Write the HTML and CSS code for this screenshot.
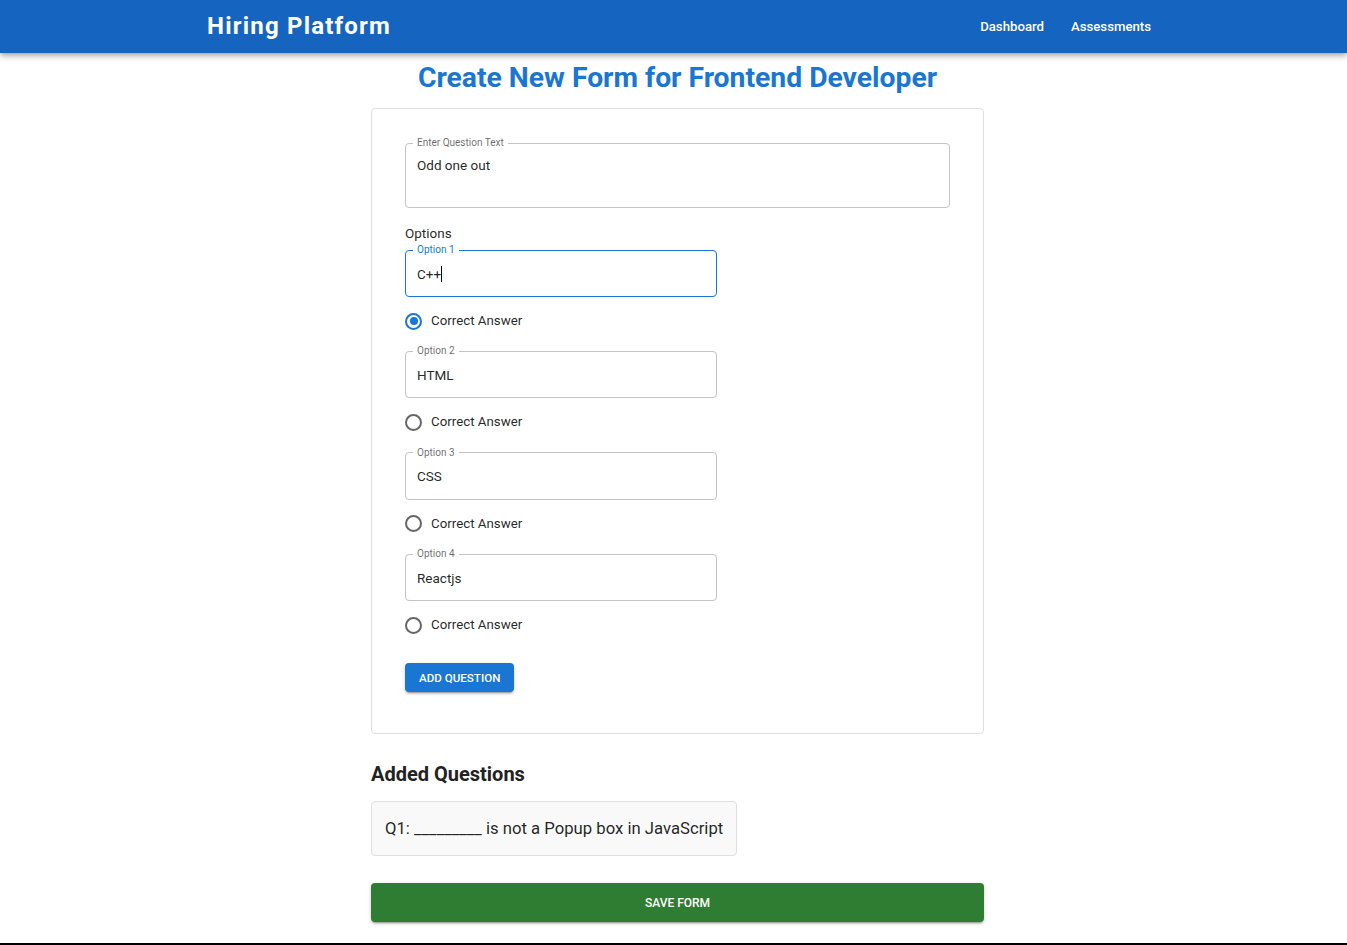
FILE: index.html
```html
<!DOCTYPE html>
<html lang="en">
<head>
<meta charset="utf-8">
<title>Hiring Platform</title>
<link rel="stylesheet" href="styles.css">
</head>
<body>
<header class="appbar">
  <div class="toolbar">
    <div class="brand">Hiring Platform</div>
    <nav class="nav">
      <a class="nav-btn">Dashboard</a>
      <a class="nav-btn">Assessments</a>
    </nav>
  </div>
</header>
<main class="page">
  <h1 class="page-title">Create New Form for Frontend Developer</h1>
  <section class="card">
    <fieldset class="field field-multi">
      <legend class="field-label">Enter Question Text</legend>
      <div class="field-value">Odd one out</div>
    </fieldset>
    <div class="options-label">Options</div>
    <div class="options">
      <div class="option">
        <fieldset class="field field-opt focused">
          <legend class="field-label">Option 1</legend>
          <div class="field-value">C++<span class="caret"></span></div>
        </fieldset>
        <label class="radio-row"><span class="radio checked"></span><span class="radio-text">Correct Answer</span></label>
      </div>
      <div class="option">
        <fieldset class="field field-opt">
          <legend class="field-label">Option 2</legend>
          <div class="field-value">HTML</div>
        </fieldset>
        <label class="radio-row"><span class="radio"></span><span class="radio-text">Correct Answer</span></label>
      </div>
      <div class="option">
        <fieldset class="field field-opt">
          <legend class="field-label">Option 3</legend>
          <div class="field-value">CSS</div>
        </fieldset>
        <label class="radio-row"><span class="radio"></span><span class="radio-text">Correct Answer</span></label>
      </div>
      <div class="option">
        <fieldset class="field field-opt">
          <legend class="field-label">Option 4</legend>
          <div class="field-value">Reactjs</div>
        </fieldset>
        <label class="radio-row"><span class="radio"></span><span class="radio-text">Correct Answer</span></label>
      </div>
    </div>
    <button class="btn btn-primary">ADD QUESTION</button>
  </section>
  <h2 class="section-title">Added Questions</h2>
  <div class="question-item">Q1: _________ is not a Popup box in JavaScript</div>
  <button class="btn btn-save">SAVE FORM</button>
</main>
<div class="bottom-line"></div>
</body>
</html>
```
FILE: styles.css
```css
* { box-sizing: border-box; }
html, body { margin: 0; padding: 0; }
body {
  font-family: Roboto, "Liberation Sans", Arial, sans-serif;
  color: rgba(0, 0, 0, 0.87);
  background: #fff;
}
.appbar {
  height: 53px;
  background: #1565c0;
  color: #fff;
  box-shadow: 0 2px 4px -1px rgba(0,0,0,.2), 0 4px 5px 0 rgba(0,0,0,.14), 0 1px 10px 0 rgba(0,0,0,.12);
  position: relative;
  z-index: 1;
}
.toolbar {
  height: 53px;
  display: flex;
  align-items: center;
  justify-content: space-between;
  padding-left: 207px;
  padding-right: 188px;
}
.brand {
  font-size: 24px;
  font-weight: 700;
  letter-spacing: 1.2px;
  line-height: 1;
  margin-top: -1px;
}
.nav { display: flex; gap: 11px; }
.nav-btn {
  font-size: 13.2px;
  font-weight: 500;
  padding: 6px 8px;
  color: #fff;
  line-height: 20px;
}
.page {
  width: 613px;
  margin-left: calc(50% - 302.5px);
}
.page-title {
  margin: 8px 0 13px;
  text-align: center;
  font-size: 28.3px;
  font-weight: 700;
  line-height: 34px;
  color: #1976d2;
}
.card {
  border: 1px solid #e0e0e0;
  border-radius: 4px;
  padding: 29px 33px 41px;
  background: #fff;
}
.field {
  margin: 0;
  border: 1px solid #c4c4c4;
  border-radius: 4px;
  padding: 0 11px;
  min-width: 0;
}
.field-label {
  font-size: 10px;
  line-height: 10px;
  padding: 0 4px;
  margin-left: -4px;
  color: rgba(0,0,0,0.6);
}
.field-value {
  font-size: 13.5px;
  line-height: 20px;
  color: rgba(0,0,0,0.87);
}
.field-multi { height: 70px; }
.field-multi .field-value { padding-top: 7px; }
.field-opt { width: 312px; height: 52px; }
.field-opt .field-value { padding-top: 8.5px; }
.field-opt.focused { border-color: #1976d2; }
.field-opt.focused .field-label { color: #1976d2; }
.caret {
  display: inline-block;
  width: 1px;
  height: 16px;
  background: #000;
  vertical-align: -3px;
}
.options-label {
  margin-top: 15px;
  margin-bottom: 2px;
  font-size: 13.5px;
  line-height: 20px;
}
.options { display: flex; flex-direction: column; gap: 13.4px; }
.option { display: flex; flex-direction: column; gap: 12px; }
.radio-row {
  display: flex;
  align-items: center;
  gap: 9px;
  height: 24px;
}
.radio {
  width: 17px;
  height: 17px;
  border: 2px solid rgba(0,0,0,0.6);
  border-radius: 50%;
  display: flex;
  align-items: center;
  justify-content: center;
}
.radio.checked { border-color: #1976d2; }
.radio.checked::after {
  content: "";
  width: 8px;
  height: 8px;
  border-radius: 50%;
  background: #1976d2;
}
.radio-text { font-size: 13.3px; line-height: 20px; }
.btn {
  font-family: Roboto, "Liberation Sans", Arial, sans-serif;
  border: 0;
  border-radius: 4px;
  color: #fff;
  font-size: 12px;
  font-weight: 500;
  cursor: pointer;
  box-shadow: 0 3px 1px -2px rgba(0,0,0,.2), 0 2px 2px 0 rgba(0,0,0,.14), 0 1px 5px 0 rgba(0,0,0,.12);
}
.btn-primary {
  display: block;
  margin-top: 26px;
  height: 29px;
  padding: 0 14px;
  font-size: 11.6px;
  background: #1976d2;
}
.section-title {
  margin: 28px 0 15px;
  font-size: 20px;
  font-weight: 700;
  line-height: 24px;
  color: #222;
}
.question-item {
  display: inline-block;
  padding: 16px 13px;
  font-size: 16.7px;
  line-height: 21px;
  background: #f9f9f9;
  border: 1px solid #e0e0e0;
  border-radius: 4px;
}
.btn-save {
  display: block;
  width: 100%;
  height: 39px;
  margin-top: 27px;
  background: #2e7d32;
}
.bottom-line {
  margin-top: 21px;
  height: 2px;
  background: #000;
}
```
